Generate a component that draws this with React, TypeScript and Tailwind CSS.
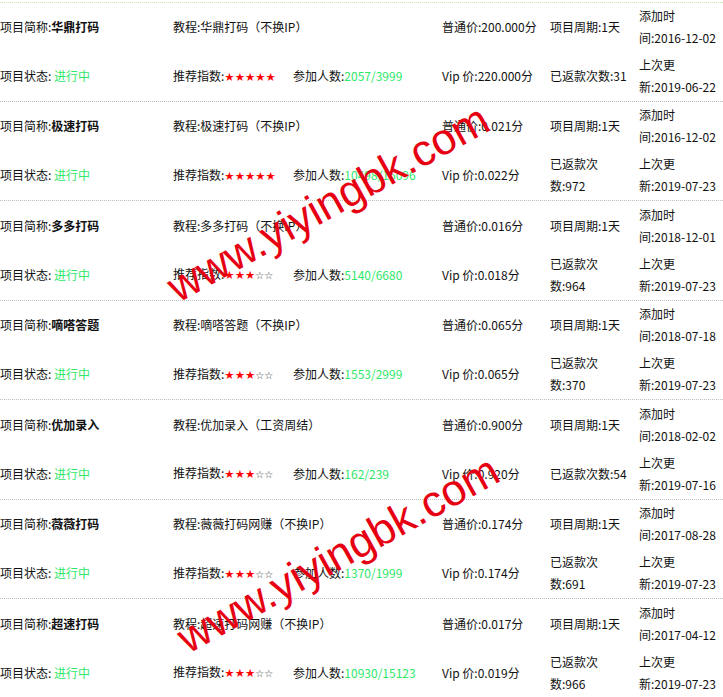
import React from "react";

type Project = {
  name: string;
  course: string;
  stars: number;
  joined: string;
  price: string;
  vip: string;
  returned: string[];
  added: string;
  updated: string;
};

const projects: Project[] = [
  {
    name: "华鼎打码",
    course: "教程:华鼎打码（不换IP）",
    stars: 5,
    joined: "2057/3999",
    price: "200.000",
    vip: "220.000",
    returned: ["已返款次数:31"],
    added: "2016-12-02",
    updated: "2019-06-22",
  },
  {
    name: "极速打码",
    course: "教程:极速打码（不换IP）",
    stars: 5,
    joined: "10498/15096",
    price: "0.021",
    vip: "0.022",
    returned: ["已返款次", "数:972"],
    added: "2016-12-02",
    updated: "2019-07-23",
  },
  {
    name: "多多打码",
    course: "教程:多多打码（不换IP）",
    stars: 3,
    joined: "5140/6680",
    price: "0.016",
    vip: "0.018",
    returned: ["已返款次", "数:964"],
    added: "2018-12-01",
    updated: "2019-07-23",
  },
  {
    name: "嘀嗒答题",
    course: "教程:嘀嗒答题（不换IP）",
    stars: 3,
    joined: "1553/2999",
    price: "0.065",
    vip: "0.065",
    returned: ["已返款次", "数:370"],
    added: "2018-07-18",
    updated: "2019-07-23",
  },
  {
    name: "优加录入",
    course: "教程:优加录入（工资周结）",
    stars: 3,
    joined: "162/239",
    price: "0.900",
    vip: "0.920",
    returned: ["已返款次数:54"],
    added: "2018-02-02",
    updated: "2019-07-16",
  },
  {
    name: "薇薇打码",
    course: "教程:薇薇打码网赚（不换IP）",
    stars: 3,
    joined: "1370/1999",
    price: "0.174",
    vip: "0.174",
    returned: ["已返款次", "数:691"],
    added: "2017-08-28",
    updated: "2019-07-23",
  },
  {
    name: "超速打码",
    course: "教程:超速打码网赚（不换IP）",
    stars: 3,
    joined: "10930/15123",
    price: "0.017",
    vip: "0.019",
    returned: ["已返款次", "数:966"],
    added: "2017-04-12",
    updated: "2019-07-23",
  },
];

function Stars({ n }: { n: number }) {
  return (
    <span className="font-['DejaVu_Sans',sans-serif] text-[11.5px]">
      <span className="text-[#ff0000]">{"★".repeat(n)}</span>
      <span className="text-[#333] text-[10px]">{"☆".repeat(5 - n)}</span>
    </span>
  );
}

function Lines({ lines }: { lines: string[] }) {
  return (
    <div className="leading-[22px]">
      {lines.map((l) => (
        <div key={l}>{l}</div>
      ))}
    </div>
  );
}

function ProjectRow({ p, first }: { p: Project; first: boolean }) {
  return (
    <div
      className={`h-[99.5px] flex flex-col border-b border-dotted border-b-[#bdbdbd] ${
        first ? "border-t border-t-[#c6e6ad]" : ""
      }`}
    >
      <div className="flex-1 flex items-center">
        <div className="w-[173px]">
          项目简称:<span className="font-bold">{p.name}</span>
        </div>
        <div className="w-[269px]">{p.course}</div>
        <div className="w-[108px]">普通价:{p.price}分</div>
        <div className="w-[89px]">项目周期:1天</div>
        <Lines lines={["添加时", `间:${p.added}`]} />
      </div>
      <div className="flex-1 flex items-center">
        <div className="w-[173px]">
          项目状态: <span className="text-[#2ee86a]">进行中</span>
        </div>
        <div className="w-[269px] flex items-center">
          <span className="w-[120px]">
            推荐指数:
            <Stars n={p.stars} />
          </span>
          <span>
            参加人数:<span className="text-[#2ee86a]">{p.joined}</span>
          </span>
        </div>
        <div className="w-[108px]">Vip 价:{p.vip}分</div>
        <div className="w-[89px]">
          <Lines lines={p.returned} />
        </div>
        <Lines lines={["上次更", `新:${p.updated}`]} />
      </div>
    </div>
  );
}

export default function App() {
  return (
    <div className="relative w-[723px] h-[697px] overflow-hidden bg-white pt-[2px] text-[12px] text-[#111] font-['Noto_Sans_CJK_SC',sans-serif]">
      {projects.map((p, i) => (
        <ProjectRow key={p.name} p={p} first={i === 0} />
      ))}

      {/* watermarks */}
      <div className="absolute left-[328px] top-[203px] -translate-x-1/2 -translate-y-1/2 -rotate-[29deg] whitespace-nowrap text-[44px] leading-none text-[#e60012] font-['Liberation_Sans',Arial,sans-serif]">
        www.yiyingbk.com
      </div>
      <div className="absolute left-[338px] top-[554px] -translate-x-1/2 -translate-y-1/2 -rotate-[29deg] whitespace-nowrap text-[44px] leading-none text-[#e60012] font-['Liberation_Sans',Arial,sans-serif]">
        www.yiyingbk.com
      </div>
    </div>
  );
}
